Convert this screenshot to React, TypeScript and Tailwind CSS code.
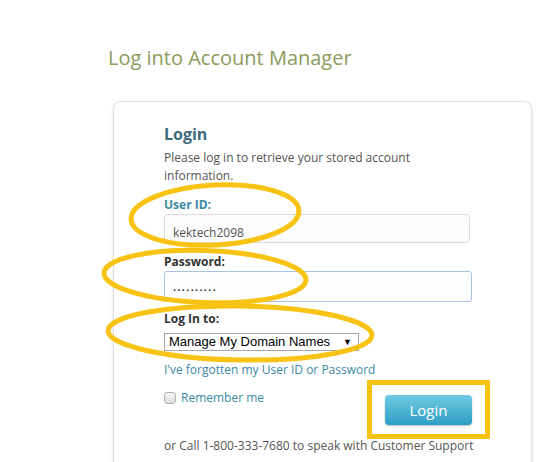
import React from "react";

const font = { fontFamily: '"Open Sans", "Liberation Sans", sans-serif' };

function Annotations() {
  return (
    <svg
      className="pointer-events-none absolute inset-0"
      width="540"
      height="462"
      viewBox="0 0 540 462"
      fill="none"
    >
      <g stroke="#f8c313" strokeWidth="5">
        <ellipse cx="215" cy="215" rx="84" ry="30" transform="rotate(-3 215 215)" />
        <ellipse cx="205" cy="276.5" rx="101" ry="26" transform="rotate(2 205 276)" />
        <ellipse cx="240" cy="333" rx="132" ry="27" transform="rotate(1 240 333)" />
        <rect x="369.5" y="382.5" width="118" height="54" />
      </g>
    </svg>
  );
}

export default function App() {
  return (
    <div className="relative h-[462px] w-[540px] overflow-hidden bg-white" style={font}>
      <h1 className="pl-[108px] pt-[44px] text-[20px] font-normal leading-[28px] text-[#8b9b5c]">
        Log into Account Manager
      </h1>

      <div className="ml-[113px] mt-[29px] h-[400px] w-[419px] rounded-[8px] border border-[#e2e2e2] bg-white pl-[50px] pt-[21px] shadow-[0_1px_3px_rgba(0,0,0,0.12)]">
        <div className="w-[308px]">
          <h2 className="text-[16px] font-bold leading-[22px] text-[#3d6b7c]">Login</h2>
          <p className="mt-[4px] w-[260px] text-[12px] leading-[18px] text-[#555]">
            Please log in to retrieve your stored account information.
          </p>

          <label className="mt-[11px] block text-[12px] font-bold leading-[18px] text-[#3a8aa3]">
            User ID:
          </label>
          <div className="h-[29px] w-[306px] rounded-[4px] border border-[#dcdcdc] bg-[#fcfcfc] pl-[8px] pt-[11px] text-[12px] leading-[14px] text-[#555]">
            kektech2098
          </div>

          <label className="mt-[10px] block text-[12px] font-bold leading-[18px] text-[#333]">
            Password:
          </label>
          <div className="h-[31px] w-[308px] rounded-[3px] border border-[#a9c3e6] bg-[#fdfdfd] pl-[8px] pt-[12px] text-[8px] leading-[12px] tracking-[1.4px] text-[#333]">
            ••••••••••
          </div>

          <label className="mt-[8px] block text-[12px] font-bold leading-[18px] text-[#333]">
            Log In to:
          </label>
          <div
            className="mt-[5px] flex h-[18px] w-[195px] items-center justify-between border border-[#a6a6a6] bg-white pl-[4px] pr-[6px] text-[13px] leading-[16px] text-black"
            style={{ fontFamily: '"Liberation Sans", Arial, sans-serif' }}
          >
            <span>Manage My Domain Names</span>
            <span className="text-[9px]">▼</span>
          </div>

          <a className="mt-[10px] block text-[12px] leading-[18px] text-[#3a8aa3]">
            I&apos;ve forgotten my User ID or Password
          </a>

          <div className="mt-[9px] flex items-start justify-between">
            <label className="mt-[1px] flex items-center gap-[5px] text-[12px] leading-[18px] text-[#3a8aa3]">
              <span className="h-[12px] w-[12px] rounded-[3px] border border-[#b0b0b0] bg-gradient-to-b from-[#f6f6f6] to-[#dedede]" />
              Remember me
            </label>
            <button className="mt-[7px] h-[30px] w-[87px] rounded-[4px] bg-gradient-to-b from-[#6fcbe4] to-[#2a9ec4] text-[15px] leading-[20px] text-white shadow-[0_1px_2px_rgba(0,0,0,0.25)]">
              Login
            </button>
          </div>

          <p className="mt-[12px] whitespace-nowrap text-[12px] leading-[18px] text-[#555]">
            or Call 1-800-333-7680 to speak with Customer Support
          </p>
        </div>
      </div>

      <Annotations />
    </div>
  );
}
